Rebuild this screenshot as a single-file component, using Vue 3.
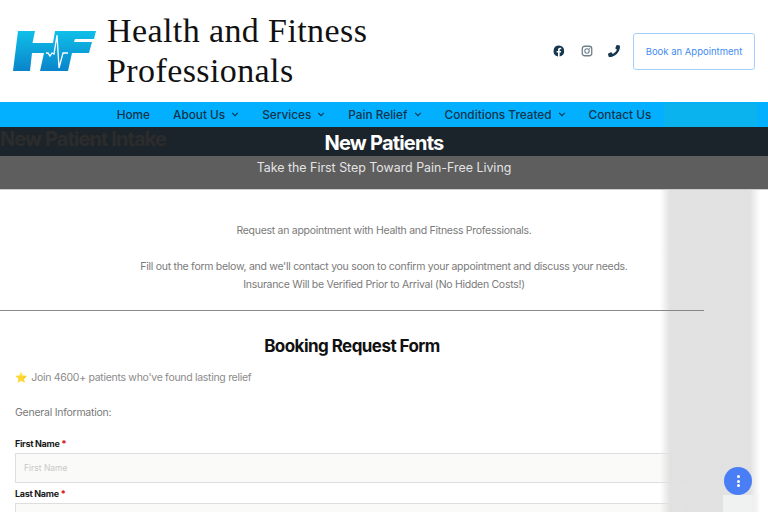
<template>
  <div class="page">
    <header class="top">
      <div class="brand">
        <svg class="logo" viewBox="0 0 83 40" width="83" height="40">
          <defs>
            <linearGradient id="hf" x1="0" y1="0" x2="0" y2="1">
              <stop offset="0" stop-color="#0fc0e8" />
              <stop offset="1" stop-color="#0a84cb" />
            </linearGradient>
          </defs>
          <path fill="url(#hf)" d="M5 0H22L19.500 12H40L42 0H83L81 8H62L61 11H79L76 22H59L55 40H27L31 22H19L17 40H0Z" />
          <path fill="none" stroke="#fff" stroke-width="1.300" d="M33 22h2l2 3 2-3 2 1 3-19 2 33 4-15h5" />
        </svg>
        <div class="site-name">Health and Fitness<br />Professionals</div>
      </div>
      <div class="top-right">
        <div class="socials">
          <svg class="ico" viewBox="0 0 24 24"><path fill="#16384f" d="M12 1a11 11 0 0 0-2 21.800v-7.600H7.300V12H10V9.600c0-2.700 1.600-4.200 4-4.200 1.200 0 2.400.2 2.400.2v2.700H15c-1.300 0-1.700.8-1.700 1.700V12h3l-.5 3.200h-2.500v7.600A11 11 0 0 0 12 1z" /></svg>
          <svg class="ico" viewBox="0 0 24 24"><rect x="2.500" y="2.500" width="19" height="19" rx="5" fill="none" stroke="#6f7f8b" stroke-width="2.600" /><circle cx="12" cy="12" r="4.400" fill="none" stroke="#6f7f8b" stroke-width="2.200" /><circle cx="17.300" cy="6.700" r="1.200" fill="#6f7f8b" /></svg>
          <svg class="ico" viewBox="0 0 512 512"><path fill="#16384f" transform="translate(512 0) scale(-1 1)" d="M497.400 361.800l-112-48a24 24 0 0 0-28 6.900l-49.600 60.600A370.700 370.700 0 0 1 130.600 204.100l60.600-49.600a24 24 0 0 0 6.900-28l-48-112A24.200 24.200 0 0 0 122.600.6l-104 24A24 24 0 0 0 0 48c0 256.500 207.900 464 464 464a24 24 0 0 0 23.400-18.600l24-104a24.300 24.300 0 0 0-14-27.600z" /></svg>
        </div>
        <a class="book">Book an Appointment</a>
      </div>
    </header>

    <nav class="menu">
      <a v-for="item in menu" :key="item.label" class="menu-item">
        {{ item.label }}
        <svg v-if="item.sub" class="caret" viewBox="0 0 10 6"><path d="M1.500 1l3.500 3.500L8.500 1" fill="none" stroke="#12344a" stroke-width="1.300" /></svg>
      </a>
      <span class="menu-patch"></span>
    </nav>

    <section class="hero">
      <div class="hero-dark">
        <span class="ghost">New Patient Intake</span>
        <h1>New Patients</h1>
      </div>
      <div class="hero-grey">Take the First Step Toward Pain-Free Living</div>
    </section>

    <section class="intro">
      <p>Request an appointment with Health and Fitness Professionals.</p>
      <p class="gap">Fill out the form below, and we'll contact you soon to confirm your appointment and discuss your needs.</p>
      <p>Insurance Will be Verified Prior to Arrival (No Hidden Costs!)</p>
    </section>
    <hr class="rule" />

    <section class="form">
      <h2>Booking Request Form</h2>
      <p class="join"><span class="star">⭐</span> Join 4600+ patients who've found lasting relief</p>
      <p class="general">General Information:</p>
      <label>First Name <b>*</b></label>
      <div class="field">First Name</div>
      <label>Last Name <b>*</b></label>
      <div class="field"></div>
    </section>

    <div class="side"></div>
    <div class="fab"><i></i><i></i><i></i></div>
  </div>
</template>

<script setup>
const menu = [
  { label: 'Home' },
  { label: 'About Us', sub: true },
  { label: 'Services', sub: true },
  { label: 'Pain Relief', sub: true },
  { label: 'Conditions Treated', sub: true },
  { label: 'Contact Us' },
]
</script>

<style>
html, body { margin: 0; overflow: hidden; background: #fff; }
</style>

<style scoped>
.page {
  position: relative;
  width: 768px;
  height: 512px;
  overflow: hidden;
  font-family: Inter, "Liberation Sans", sans-serif;
  color: #7a7a7a;
}
.top {
  height: 102px;
  display: flex;
  align-items: center;
  justify-content: space-between;
  padding: 0 13px;
}
.brand { display: flex; align-items: center; gap: 11px; }
.logo { display: block; }
.site-name {
  font-family: "Liberation Serif", serif;
  font-size: 34px;
  line-height: 40px;
  letter-spacing: 0.400px;
  color: #111;
}
.top-right { display: flex; align-items: center; gap: 13px; }
.socials { display: flex; gap: 15.500px; }
.ico { width: 12px; height: 12px; display: block; }
.book {
  width: 122px;
  height: 37px;
  box-sizing: border-box;
  border: 1.500px solid #a5cffb;
  border-radius: 3px;
  display: flex;
  align-items: center;
  justify-content: center;
  font-size: 9.500px;
  color: #3f8cf0;
}
.menu {
  position: relative;
  height: 25px;
  background: #02b0ff;
  display: flex;
  align-items: center;
  justify-content: center;
  gap: 23px;
  font-size: 11.800px;
  font-weight: 500;
  color: #12344a;
}
.menu-item { display: flex; align-items: center; gap: 6px; }
.caret { width: 8px; height: 5px; }
.menu-patch {
  position: absolute;
  left: 664px;
  top: 1px;
  width: 93px;
  height: 24px;
  background: #0ab2ee;
}
.hero-dark {
  position: relative;
  height: 29px;
  box-sizing: border-box;
  padding-top: 3px;
  background: #1b242a;
  display: flex;
  align-items: center;
  justify-content: center;
}
.ghost {
  position: absolute;
  left: 0;
  top: 0;
  font-size: 20px;
  font-weight: 700;
  letter-spacing: -0.900px;
  color: #2c2c2c;
}
h1 {
  margin: 0;
  font-size: 20px;
  font-weight: 700;
  letter-spacing: -0.800px;
  color: #fff;
}
.hero-grey {
  height: 33px;
  background: #5e5e5e;
  border-bottom: 1px solid #ccc;
  text-align: center;
  font-size: 12.400px;
  line-height: 23px;
  color: #e4e4e4;
}
.intro {
  padding-top: 32px;
  text-align: center;
  font-size: 10.500px;
  line-height: 18px;
  letter-spacing: -0.280px;
}
.intro p { margin: 0; }
.intro .gap { margin-top: 18px; }
.rule {
  position: relative;
  z-index: 2;
  width: 704px;
  margin: 16px 0 0;
  border: 0;
  border-top: 1px solid #888;
}
.form { padding-left: 15px; }
h2 {
  width: 674px;
  margin: 25px 0 0;
  text-align: center;
  font-size: 17px;
  line-height: 20px;
  font-weight: 700;
  letter-spacing: -0.550px;
  color: #111;
}
.join {
  margin: 14px 0 0;
  font-size: 10.500px;
  line-height: 14px;
  letter-spacing: -0.300px;
  color: #8b8b8b;
}
.star { font-size: 10px; margin-right: 2px; }
.general {
  margin: 21px 0 0;
  font-size: 10.500px;
  line-height: 14px;
  letter-spacing: -0.250px;
}
label {
  display: block;
  margin-top: 18px;
  font-size: 9px;
  line-height: 12px;
  font-weight: 700;
  letter-spacing: -0.300px;
  color: #1a1a1a;
}
label b { color: #e02020; }
.field {
  width: 673px;
  height: 30px;
  box-sizing: border-box;
  margin-top: 3px;
  padding-left: 8px;
  background: #fafaf8;
  border: 1px solid #dedede;
  font-size: 8.500px;
  line-height: 28px;
  color: #c9c9c9;
}
.field + label { margin-top: 5px; }
.side {
  position: absolute;
  left: 660px;
  top: 190px;
  width: 100px;
  height: 322px;
  background: linear-gradient(90deg, rgba(224, 224, 224, 0) 0, rgba(224, 224, 224, 0.95) 10px, rgba(224, 224, 224, 0.95) 90px, rgba(224, 224, 224, 0) 100px);
}
.side::after {
  content: "";
  position: absolute;
  right: 0;
  bottom: 0;
  width: 37px;
  height: 17px;
  background: linear-gradient(90deg, #f0f1f1 75%, rgba(240, 241, 241, 0));
}
.fab {
  position: absolute;
  left: 724px;
  top: 467px;
  width: 28px;
  height: 28px;
  border-radius: 50%;
  background: #4a7ef5;
  display: flex;
  flex-direction: column;
  align-items: center;
  justify-content: center;
  gap: 1.500px;
}
.fab i { width: 3px; height: 3px; border-radius: 50%; background: #fff; }
</style>
